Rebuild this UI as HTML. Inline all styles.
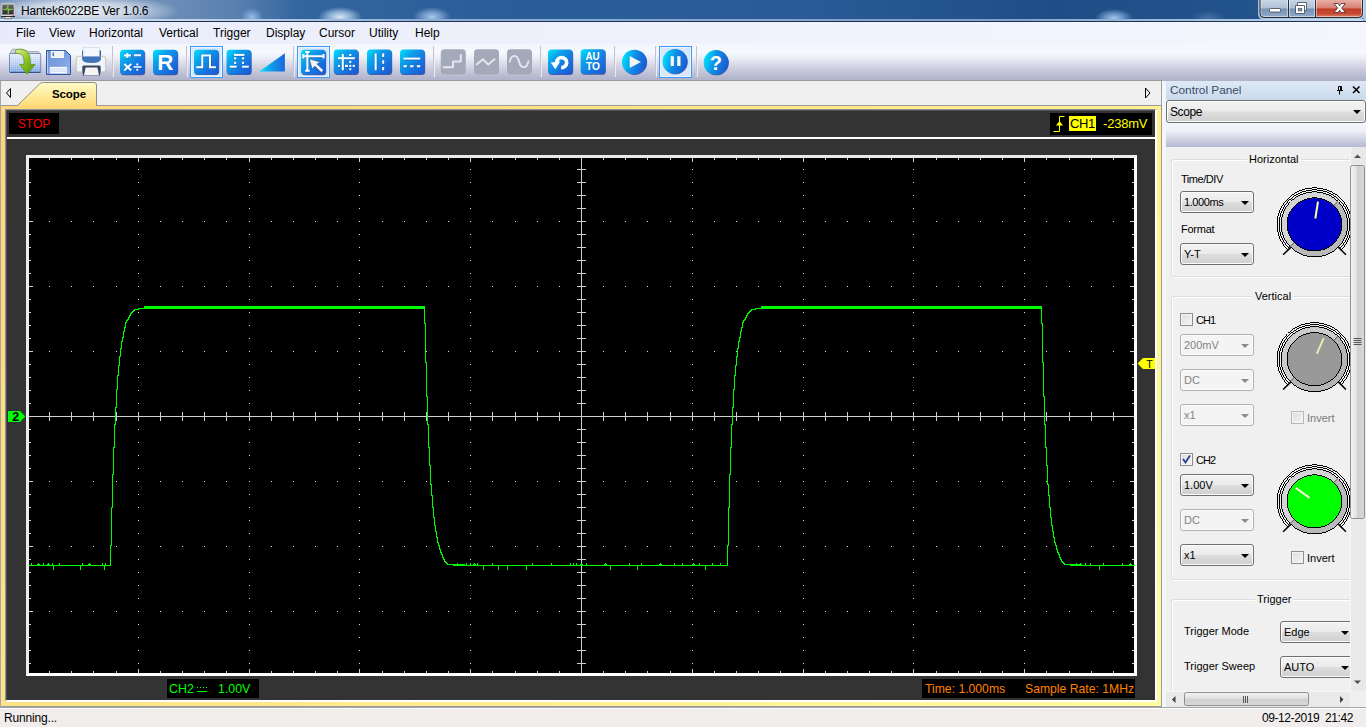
<!DOCTYPE html><html><head><meta charset="utf-8"><title>Hantek6022BE Ver 1.0.6</title><style>
*{box-sizing:border-box;margin:0;padding:0}
html,body{width:1368px;height:728px;overflow:hidden;background:#fff;font-family:"Liberation Sans",sans-serif;}
.a{position:absolute}
#win{position:absolute;left:0;top:0;width:1366px;height:727px;overflow:hidden;background:#f0f0f0}
#title{left:0;top:0;width:1366px;height:22px;background:
 radial-gradient(ellipse 100px 16px at 80px 11px,rgba(255,255,255,.85) 0,rgba(255,255,255,.6) 55%,rgba(255,255,255,0) 100%),
 radial-gradient(ellipse 11px 9px at 252px 17px,rgba(165,205,245,.8),rgba(165,205,245,0) 100%),
 radial-gradient(ellipse 22px 10px at 340px 17px,rgba(225,238,252,.95) 0,rgba(200,225,250,.6) 50%,rgba(200,225,250,0) 100%),
 radial-gradient(ellipse 19px 10px at 432px 17px,rgba(180,212,245,.9) 0,rgba(170,205,240,.5) 50%,rgba(170,205,240,0) 100%),
 radial-gradient(ellipse 19px 9px at 1114px 18px,rgba(175,212,248,.9) 0,rgba(165,205,245,.5) 50%,rgba(165,205,245,0) 100%),
 radial-gradient(ellipse 18px 7px at 1208px 18px,rgba(120,160,210,.4),rgba(120,160,210,0) 100%),
 linear-gradient(90deg,#7896bd 0,#6f8fb8 160px,#5a80b0 235px,#33659f 300px,#2b5d98 500px,#2a5b96 800px,#1f4e87 1050px,#23538b 1250px,#2f6099 1366px)}
#tline1{left:0;top:19px;width:1366px;height:2px;background:linear-gradient(90deg,#d5e2f0 0,#c0d3e8 200px,#8eaed3 420px,#7ea1ca 1000px,#a9c3e0 1230px,#c8daee 1366px)}
#tline2{left:0;top:21px;width:1366px;height:1px;background:#1d3353}
#ttext{left:21px;top:4px;font-size:12px;line-height:15px;color:#000;white-space:nowrap;letter-spacing:-.22px}
#menu{left:0;top:22px;width:1366px;height:22px;background:linear-gradient(90deg,#e9ebfb 0,#edf0fb 30%,#f1f4fc 70%,#f3f6fd 100%)}
.mi{position:absolute;top:26px;font-size:12px;line-height:15px;color:#000;white-space:nowrap}
#tb{left:0;top:44px;width:1366px;height:37px;background:linear-gradient(180deg,#f3f6fc 0,#f5f8fd 9px,#eef0f8 13px,#dfe1ee 18px,#c9cbdd 26px,#b6b8cf 33px,#b0b2ca 37px)}
.sep{position:absolute;top:47px;width:1px;height:30px;background:#c9c9cf;box-shadow:1px 0 0 #f5f5fa}
.hl{position:absolute;top:46px;width:33px;height:32px;border:1px solid #3399ff;background:#d6e8fb}
#tabbar{left:0;top:81px;width:1162px;height:25px;background:#f0f0f0;border-right:1px solid #a0a0a0}
#ybox{left:0;top:105px;width:1162px;height:602px;border:1px solid #9a9a9a;border-left-color:#e8e8e8;background:linear-gradient(132deg,#ffd678 0,#fffc9e 100%)}
#dark{left:5px;top:109px;width:1152px;height:593px;background:#333;border-top:1px solid #8a8e97;border-left:1px solid #8a8e97;border-right:2px solid #fff;border-bottom:2px solid #fff;box-shadow:inset 1px 1px 0 #505050}
.bb{position:absolute;background:#000;font-size:12px;line-height:21px;white-space:nowrap}
#status{left:0;top:708px;width:1365px;height:19px;background:#f0edec;border-top:1px solid #fff;font-size:12px;color:#000}
#cp{left:1162px;top:81px;width:204px;height:626px;background:#f3f6fc}
#cph{left:4px;top:0;width:200px;height:19px;background:linear-gradient(180deg,#dfe9f5,#c9d9ec);color:#3b4c68;font-size:11.8px;line-height:18px}
#cpg{left:4px;top:42px;width:200px;height:24px;background:linear-gradient(180deg,#f4f6fc 0,#f0f2fa 30%,#b6b8d2 100%)}
#cpc{left:4px;top:66px;width:184px;height:544px;background:#f0f0f0;overflow:hidden}
.combo{position:absolute;height:22px;border:1px solid #707070;border-radius:3px;background:linear-gradient(180deg,#f2f2f2 0,#ebebeb 48%,#dddddd 52%,#cfcfcf 100%);box-shadow:inset 0 0 0 1px #fcfcfc;font-size:11px;line-height:20px;padding-left:3px;color:#000;white-space:nowrap}
.combo.dis{border-color:#adb2b5;background:#f4f4f4;color:#838383}
.combo i{position:absolute;right:4px;top:9px;width:0;height:0;border-left:4px solid transparent;border-right:4px solid transparent;border-top:4px solid #000}
.combo.dis i{border-top-color:#8a8a8a}
.grp{position:absolute;border:1px solid #d5dfe5;border-radius:3px;box-shadow:inset 1px 1px 0 #fff, 1px 1px 0 #fff}
.gt{position:absolute;background:#f0f0f0;font-size:11px;line-height:14px;color:#000;padding:0 2px;white-space:nowrap}
.lb{position:absolute;font-size:11px;line-height:14px;color:#000;white-space:nowrap}
.cb{position:absolute;width:13px;height:13px;border:1px solid #8e8f8f;background:linear-gradient(135deg,#dcdcdc,#f6f6f6);box-shadow:inset 0 0 0 1px #f4f4f4}
</style></head><body><div id="win"><div id="title" class="a"></div><div id="tline1" class="a"></div><div id="tline2" class="a"></div>
<div class="a" style="left:1363px;top:0;width:3px;height:21px;background:linear-gradient(90deg,#8fb0d6,#b4cde8)"></div>
<svg class="a" style="left:0;top:0" width="20" height="21" viewBox="0 0 20 21">
<defs><linearGradient id="scr" x1="0" y1="0" x2="0" y2="1"><stop offset="0" stop-color="#6a6a6a"/><stop offset="1" stop-color="#2a2a2a"/></linearGradient></defs>
<rect x="1.300" y="3.300" width="13.400" height="12.800" rx=".8" fill="#dedede" stroke="#b5b5b5" stroke-width=".6"/>
<rect x="2.300" y="4.500" width="11.400" height="10" fill="url(#scr)"/>
<path d="M3.300,9.400H6.500L7.300,8.300L7.900,5.300L8.300,13.600L8.900,9.400H12.800" fill="none" stroke="#7fc241" stroke-width="1.100"/>
<rect x="12.600" y="14.900" width="1.200" height="1" fill="#e0405a"/>
<rect x="1" y="16.100" width="14" height="1" fill="#1c1c1c"/>
<path d="M5.800,17.100H10.200L11,18.300H5Z" fill="#eee"/><rect x="4" y="18.300" width="8" height=".9" fill="#777"/></svg>
<div id="ttext" class="a">Hantek6022BE Ver 1.0.6</div>
<svg class="a" style="left:1256px;top:0" width="110" height="21" viewBox="-2 0 110 21">
<defs>
<linearGradient id="wb" x1="0" y1="0" x2="0" y2="1"><stop offset="0" stop-color="#c9d6e5"/><stop offset=".47" stop-color="#aebfd4"/><stop offset=".5" stop-color="#7490b3"/><stop offset="1" stop-color="#93aecd"/></linearGradient>
<linearGradient id="wc" x1="0" y1="0" x2="0" y2="1"><stop offset="0" stop-color="#eaaea4"/><stop offset=".47" stop-color="#d67e70"/><stop offset=".5" stop-color="#c23b26"/><stop offset=".8" stop-color="#c84c34"/><stop offset="1" stop-color="#df9274"/></linearGradient>
</defs>
<path d="M1,0V13.500Q1,18.500 6,18.500H100.500Q105.500,18.500 105.500,13.500V0" fill="none" stroke="#d6e4f2" stroke-opacity=".75" stroke-width="2"/>
<path d="M2,0H30.500V17.500H6Q2,17.500 2,13.500Z" fill="url(#wb)"/>
<path d="M30.500,0H57.500V17.500H30.500Z" fill="url(#wb)"/>
<path d="M57.500,0H104.500V13.500Q104.500,17.500 100.500,17.500H57.500Z" fill="url(#wc)"/>
<path d="M3,0V13.500Q3,16.500 6,16.500H29.500V0M31.500,0V16.500H56.500V0M58.500,0V16.500H100.500Q103.500,16.500 103.500,13.500V0" fill="none" stroke="#fff" stroke-opacity=".45" stroke-width="1"/>
<path d="M2,0V13.500Q2,17.500 6,17.500H100.500Q104.500,17.500 104.500,13.500V0M30.500,0V17.500M57.500,0V17.500" fill="none" stroke="#27303c" stroke-width="1"/>
<rect x="11.500" y="8.500" width="11" height="3.500" rx=".8" fill="#fff" stroke="#4a5664" stroke-width=".9"/>
<path d="M39.500,2.500H48.500V10.500H39.500Z" fill="#fff" stroke="#4a5664" stroke-width=".9"/><rect x="42" y="5" width="4" height="3" fill="#8aa2c0"/>
<path d="M37.500,5.500H46.500V13.500H37.500Z" fill="#fff" stroke="#4a5664" stroke-width=".9"/><rect x="40.200" y="8.300" width="3.600" height="2.600" fill="#7d97b8" stroke="#4a5664" stroke-width=".7"/>
<path d="M76,3.500H80L81.700,5.800L83.400,3.500H87.400L83.700,8L87.400,12.500H83.400L81.700,10.200L80,12.500H76L79.700,8Z" fill="#fff" stroke="#4a3a3a" stroke-width=".9"/>
</svg>
<div id="menu" class="a"></div>
<div class="mi" style="left:16px">File</div>
<div class="mi" style="left:49px">View</div>
<div class="mi" style="left:89px">Horizontal</div>
<div class="mi" style="left:159px">Vertical</div>
<div class="mi" style="left:213px">Trigger</div>
<div class="mi" style="left:266px">Display</div>
<div class="mi" style="left:319px">Cursor</div>
<div class="mi" style="left:369px">Utility</div>
<div class="mi" style="left:415px">Help</div>
<div id="tb" class="a"></div><div class="a" style="left:0;top:80px;width:1162px;height:1px;background:#9a9a9a"></div>
<svg class="a" style="left:0;top:44px" width="760" height="37" viewBox="0 44 760 37"><defs>
<linearGradient id="bl" x1="0" y1="0" x2="1" y2="1"><stop offset="0" stop-color="#00e4ff"/><stop offset=".3" stop-color="#0ca2ea"/><stop offset=".7" stop-color="#1670de"/><stop offset="1" stop-color="#1a58d2"/></linearGradient>
<linearGradient id="blc" x1="0" y1="0.35" x2="1" y2="0.65"><stop offset="0" stop-color="#00e4ff"/><stop offset=".45" stop-color="#0f8ee6"/><stop offset="1" stop-color="#1a58d2"/></linearGradient>
<linearGradient id="tri" x1="0" y1="0" x2="1" y2="0"><stop offset="0" stop-color="#00e4ff"/><stop offset=".5" stop-color="#0f9ae8"/><stop offset="1" stop-color="#1a66dc"/></linearGradient>
<linearGradient id="fo" x1="0" y1="0" x2="0" y2="1"><stop offset="0" stop-color="#e4ecfb"/><stop offset=".5" stop-color="#b5cbf2"/><stop offset="1" stop-color="#6a98df"/></linearGradient>
<linearGradient id="ga" x1="0" y1="0" x2="1" y2="1"><stop offset="0" stop-color="#dff09a"/><stop offset=".5" stop-color="#8cc322"/><stop offset="1" stop-color="#4f8f0e"/></linearGradient>
<linearGradient id="fl" x1="0" y1="0" x2="1" y2="1"><stop offset="0" stop-color="#6a8fd6"/><stop offset=".6" stop-color="#7fa3e2"/><stop offset="1" stop-color="#98b8ee"/></linearGradient>
<pattern id="grid" width="2" height="2" patternUnits="userSpaceOnUse"><path d="M0,0.500H2M0.500,0V2" stroke="#fff" stroke-opacity=".35" stroke-width=".6"/></pattern>
<g id="sq"><rect x=".6" y=".8" width="24.600" height="24.600" rx="3.500" fill="#28307a" opacity=".75"/><rect x="0" y="0" width="24.700" height="24.700" rx="3.500" fill="url(#bl)"/></g>
<g id="gq"><rect x="0" y="0" width="25" height="25.300" rx="3.500" fill="#a4a9b9"/></g>
<g id="cq"><circle cx="12.800" cy="13" r="12.400" fill="#28307a" opacity=".7"/><circle cx="12.400" cy="12.500" r="12.400" fill="url(#blc)"/></g>
</defs><rect x="112" y="46" width="1" height="31" fill="#c4c4c8"/><rect x="113" y="46" width="1" height="31" fill="#f4f4fa" opacity=".8"/><rect x="186" y="46" width="1" height="31" fill="#c4c4c8"/><rect x="187" y="46" width="1" height="31" fill="#f4f4fa" opacity=".8"/><rect x="293" y="46" width="1" height="31" fill="#c4c4c8"/><rect x="294" y="46" width="1" height="31" fill="#f4f4fa" opacity=".8"/><rect x="433" y="46" width="1" height="31" fill="#c4c4c8"/><rect x="434" y="46" width="1" height="31" fill="#f4f4fa" opacity=".8"/><rect x="540" y="46" width="1" height="31" fill="#c4c4c8"/><rect x="541" y="46" width="1" height="31" fill="#f4f4fa" opacity=".8"/><rect x="614" y="46" width="1" height="31" fill="#c4c4c8"/><rect x="615" y="46" width="1" height="31" fill="#f4f4fa" opacity=".8"/><rect x="655" y="46" width="1" height="31" fill="#c4c4c8"/><rect x="656" y="46" width="1" height="31" fill="#f4f4fa" opacity=".8"/><rect x="696" y="46" width="1" height="31" fill="#c4c4c8"/><rect x="697" y="46" width="1" height="31" fill="#f4f4fa" opacity=".8"/><rect x="190.5" y="46.500" width="32" height="31" fill="#d8e8fa" stroke="#3d9bff" stroke-width="1"/><rect x="191.5" y="47.500" width="30" height="29" fill="none" stroke="#eaf3fd" stroke-width="1"/><rect x="297.5" y="46.500" width="32" height="31" fill="#d8e8fa" stroke="#3d9bff" stroke-width="1"/><rect x="298.5" y="47.500" width="30" height="29" fill="none" stroke="#eaf3fd" stroke-width="1"/><rect x="659.5" y="46.500" width="32" height="31" fill="#d8e8fa" stroke="#3d9bff" stroke-width="1"/><rect x="660.5" y="47.500" width="30" height="29" fill="none" stroke="#eaf3fd" stroke-width="1"/><g transform="translate(120,49.8)"><use href="#sq"/><path d="M4,5.600H11M7.400,3.200V8.300" fill="none" stroke="#1a3a9a" stroke-opacity=".5" stroke-width="2" transform="translate(.6,.7)" /><path d="M4,5.600H11M7.400,3.200V8.300" fill="none" stroke="#fff" stroke-width="2" /><path d="M13.900,5.500H21.100" fill="none" stroke="#1a3a9a" stroke-opacity=".5" stroke-width="2" transform="translate(.6,.7)" /><path d="M13.900,5.500H21.100" fill="none" stroke="#fff" stroke-width="2" /><path d="M4.300,14.300L11.300,20.600M11.300,14.300L4.300,20.600" fill="none" stroke="#1a3a9a" stroke-opacity=".5" stroke-width="2" transform="translate(.6,.7)" /><path d="M4.300,14.300L11.300,20.600M11.300,14.300L4.300,20.600" fill="none" stroke="#fff" stroke-width="2" /><path d="M13.600,17.200H21.600" fill="none" stroke="#1a3a9a" stroke-opacity=".5" stroke-width="1.6" transform="translate(.6,.7)" /><path d="M13.600,17.200H21.600" fill="none" stroke="#fff" stroke-width="1.6" /><rect x="16.300" y="13.700" width="2" height="1.800" fill="#fff"/><rect x="16.300" y="19" width="2" height="1.800" fill="#fff"/></g><g transform="translate(153,49.8)"><use href="#sq"/><text x="12.800" y="20.500" text-anchor="middle" font-family="Liberation Sans, sans-serif" font-weight="bold" font-size="22.500" fill="#1a3a9a" fill-opacity=".5">R</text><text x="12.300" y="19.900" text-anchor="middle" font-family="Liberation Sans, sans-serif" font-weight="bold" font-size="22.500" fill="#fff">R</text></g><g transform="translate(194,49.7)"><use href="#sq"/><path d="M2.200,17.500H8.300V5.900H16V17.500H21.900" fill="none" stroke="#1a3a9a" stroke-opacity=".5" stroke-width="2" transform="translate(.6,.7)" /><path d="M2.200,17.500H8.300V5.900H16V17.500H21.900" fill="none" stroke="#fff" stroke-width="2" /></g><g transform="translate(226.5,49.7)"><use href="#sq"/><path d="M7.500,5.200H17.900" fill="none" stroke="#1a3a9a" stroke-opacity=".5" stroke-width="2" transform="translate(.6,.7)" /><path d="M7.500,5.200H17.900" fill="none" stroke="#fff" stroke-width="2" /><path d="M3.300,17H10.200" fill="none" stroke="#1a3a9a" stroke-opacity=".5" stroke-width="2" transform="translate(.6,.7)" /><path d="M3.300,17H10.200" fill="none" stroke="#fff" stroke-width="2" /><path d="M15.600,17H22.300" fill="none" stroke="#1a3a9a" stroke-opacity=".5" stroke-width="2" transform="translate(.6,.7)" /><path d="M15.600,17H22.300" fill="none" stroke="#fff" stroke-width="2" /><path d="M8.700,7.600V14.600" fill="none" stroke="#1a3a9a" stroke-opacity=".5" stroke-width="2" transform="translate(.6,.7)" stroke-dasharray="2.200 2.300"/><path d="M8.700,7.600V14.600" fill="none" stroke="#fff" stroke-width="2" stroke-dasharray="2.200 2.300"/><path d="M16.600,7.600V14.600" fill="none" stroke="#1a3a9a" stroke-opacity=".5" stroke-width="2" transform="translate(.6,.7)" stroke-dasharray="2.200 2.300"/><path d="M16.600,7.600V14.600" fill="none" stroke="#fff" stroke-width="2" stroke-dasharray="2.200 2.300"/></g><path d="M259.300,71.600L284.900,53.200V71.600Z" fill="url(#tri)"/><g transform="translate(301,49.8)"><use href="#sq"/><path d="M1.900,6.400H23M6.400,1.700V21.400M2.400,4.200V8.600M22.600,4.200V8.600M4.200,2.200H8.700M4.200,21H8.700" fill="none" stroke="#1a3a9a" stroke-opacity=".5" stroke-width="2" transform="translate(.6,.7)"/><path d="M1.900,6.400H23M6.400,1.700V21.400M2.400,4.200V8.600M22.600,4.200V8.600M4.200,2.200H8.700M4.200,21H8.700" fill="none" stroke="#fff" stroke-width="2"/><path d="M8.400,9.300L19.200,12.300L15.800,14.300L22.500,20.300L20.300,22.600L13.900,16.300L11.200,19.200Z" fill="#f7f7f7" stroke="#23408f" stroke-opacity=".7" stroke-width=".7"/></g><g transform="translate(333.7,49.5)"><use href="#sq"/><path d="M4.200,8.800H21.200M9.100,4.400V20.800" fill="none" stroke="#1a3a9a" stroke-opacity=".5" stroke-width="2" transform="translate(.6,.7)" /><path d="M4.200,8.800H21.200M9.100,4.400V20.800" fill="none" stroke="#fff" stroke-width="2" /><rect x="16.1" y="5.1" width="2" height="2" fill="#1a3a9a" fill-opacity=".45"/><rect x="15.6" y="4.5" width="2" height="2" fill="#fff"/><rect x="16.1" y="12.0" width="2" height="2.2" fill="#1a3a9a" fill-opacity=".45"/><rect x="15.6" y="11.4" width="2" height="2.2" fill="#fff"/><rect x="16.1" y="19.3" width="2" height="2" fill="#1a3a9a" fill-opacity=".45"/><rect x="15.6" y="18.7" width="2" height="2" fill="#fff"/><rect x="4.8" y="16.0" width="2" height="2" fill="#1a3a9a" fill-opacity=".45"/><rect x="4.3" y="15.4" width="2" height="2" fill="#fff"/><rect x="11.8" y="16.0" width="3" height="2" fill="#1a3a9a" fill-opacity=".45"/><rect x="11.3" y="15.4" width="3" height="2" fill="#fff"/><rect x="16.1" y="16.0" width="2" height="2" fill="#1a3a9a" fill-opacity=".45"/><rect x="15.6" y="15.4" width="2" height="2" fill="#fff"/><rect x="19.5" y="16.0" width="2.2" height="2" fill="#1a3a9a" fill-opacity=".45"/><rect x="19" y="15.4" width="2.2" height="2" fill="#fff"/></g><g transform="translate(367,49.5)"><use href="#sq"/><path d="M8.700,4V20.800" fill="none" stroke="#1a3a9a" stroke-opacity=".5" stroke-width="2" transform="translate(.6,.7)" /><path d="M8.700,4V20.800" fill="none" stroke="#fff" stroke-width="2" /><path d="M16.200,4V20.800" fill="none" stroke="#1a3a9a" stroke-opacity=".5" stroke-width="2" transform="translate(.6,.7)" stroke-dasharray="3.600 3.100"/><path d="M16.200,4V20.800" fill="none" stroke="#fff" stroke-width="2" stroke-dasharray="3.600 3.100"/></g><g transform="translate(400,49.5)"><use href="#sq"/><path d="M3.500,9.100H20.300" fill="none" stroke="#1a3a9a" stroke-opacity=".5" stroke-width="2" transform="translate(.6,.7)" /><path d="M3.500,9.100H20.300" fill="none" stroke="#fff" stroke-width="2" /><path d="M3.500,16.800H20.300" fill="none" stroke="#1a3a9a" stroke-opacity=".5" stroke-width="2" transform="translate(.6,.7)" stroke-dasharray="3.400 3.300"/><path d="M3.500,16.800H20.300" fill="none" stroke="#fff" stroke-width="2" stroke-dasharray="3.400 3.300"/></g><g transform="translate(440.8,49.3)"><use href="#gq"/><path d="M2.900,18H12.200V12.200H20V5.700" fill="none" stroke="#e4e7ef" stroke-width="1.900" stroke-linecap="round" stroke-linejoin="round"/></g><g transform="translate(474,49.3)"><use href="#gq"/><path d="M2.600,15.200L8.800,10L14.300,15.200L20.500,10" fill="none" stroke="#e4e7ef" stroke-width="1.900" stroke-linecap="round" stroke-linejoin="round" stroke-width="1.600"/></g><g transform="translate(507,49.3)"><use href="#gq"/><path d="M2.800,12.200C4.500,5 10,4.500 12,12.200S19.500,20 21.500,11.900" fill="none" stroke="#e4e7ef" stroke-width="1.900" stroke-linecap="round" stroke-linejoin="round" stroke-width="1.600"/></g><g transform="translate(548,49.6)"><use href="#sq"/><path d="M8.700,12.800A5,5 0 1 1 13.200,17.900" fill="none" stroke="#fff" stroke-width="3.700"/><path d="M2.800,12.900L12.300,11.900L7.300,19.600Z" fill="#fff"/></g><g transform="translate(580.6,49.3)"><use href="#sq"/><text x="4.800" y="10.600" font-family="Liberation Sans, sans-serif" font-weight="bold" font-size="10" fill="#fff" textLength="14.200" lengthAdjust="spacingAndGlyphs">AU</text><text x="5.400" y="21" font-family="Liberation Sans, sans-serif" font-weight="bold" font-size="10" fill="#fff" textLength="14" lengthAdjust="spacingAndGlyphs">TO</text></g><g transform="translate(622,49.6)"><use href="#cq"/><path d="M7.700,6.500L18.900,12.300L7.700,18.500Z" fill="#f4f4f4"/></g><g transform="translate(662.6,48.9)"><use href="#cq"/><rect x="8.100" y="7.300" width="3.200" height="9.800" fill="#f8f6f0"/><rect x="14.600" y="7.300" width="3.300" height="9.800" fill="#f8f6f0"/></g><g transform="translate(703.7,49.9)"><use href="#cq"/><text x="12.200" y="20.100" text-anchor="middle" font-family="Liberation Sans, sans-serif" font-weight="bold" font-size="20" fill="#fff">?</text></g><path d="M9.800,53.800L12.400,49.200H22.300L28.600,51.500H38.300L40.600,53.800Z" fill="#c8d2e6" stroke="#9a9484" stroke-width=".7"/>
<rect x="9.500" y="53.500" width="31.200" height="19" rx="1" fill="url(#fo)" stroke="#5b78ad" stroke-width=".8"/>
<rect x="10" y="54" width="30.200" height="18" fill="url(#grid)"/>
<path d="M10,72.400H40.400" stroke="#2f4f86" stroke-width="1"/>
<path d="M15.800,49.800C24,48.200 31,50 30.400,64.500H35.200L27.200,74.200L19.600,64.500H24C24.500,56.500 22.500,53.500 15.500,53.200Z" fill="url(#ga)" stroke="#5a8f14" stroke-width=".7"/><path d="M46.500,50.500H65.500L70.500,55.500V74.500H46.500Z" fill="url(#fl)" stroke="#2f55a2" stroke-width="1"/>
<path d="M47.500,51.500V73.500" stroke="#b9cef6" stroke-width="1"/>
<rect x="50.800" y="50.900" width="13.200" height="7.100" fill="#eef3fc"/><rect x="52.600" y="52.300" width="1.300" height="3.900" fill="#3f5fa5"/>
<rect x="49.800" y="66.900" width="17.100" height="6.600" fill="#f4f8fe"/><path d="M50.500,69.200H66.200M50.500,71.300H66.200" stroke="#c3d3ef" stroke-width=".8"/><path d="M82,50.500H101V58Q101,63 91.500,63T82,58Z" fill="#2f5f9c"/>
<rect x="76.300" y="56.300" width="29.400" height="15.600" rx="2.200" fill="#f1f3fa" stroke="#c4bc9f" stroke-width=".8"/>
<rect x="83.100" y="47.300" width="16.200" height="9.500" fill="#f2f7fd" stroke="#c9d3e3" stroke-width=".6"/>
<path d="M82,56.600H101V58.500Q101,63 91.500,63T82,58.500Z" fill="#3f74b8"/>
<path d="M82.300,67Q82.300,65.600 84,65.600H99Q100.700,65.600 100.700,67V71L99.900,75.500H83.100L82.300,71Z" fill="#34465e"/>
<path d="M85.600,67.400H97.400L99,75.200H84Z" fill="#f7f4f6"/></svg>
<div id="tabbar" class="a"></div>
<svg class="a" style="left:0;top:81px" width="1162" height="26" viewBox="0 0 1162 26">
<defs><linearGradient id="tabg" x1="0" y1="0" x2="0" y2="1"><stop offset="0" stop-color="#fffbc6"/><stop offset=".5" stop-color="#ffed9f"/><stop offset="1" stop-color="#ffd978"/></linearGradient></defs>
<path d="M17,25 L39,3.500 Q41,1.500 43.500,1.500 H94 Q96.500,1.500 96.500,4 V25 Z" fill="url(#tabg)"/>
<path d="M0,24.500 H17.500 L39.500,3 Q41,1.500 43.500,1.500 H94 Q96.500,1.500 96.500,4 V24.500 H1161" fill="none" stroke="#8e8e8e" stroke-width="1"/>
<path d="M10.500,7.500 L6.500,12 L10.500,16.500 Z" fill="none" stroke="#000" stroke-width="1"/>
<path d="M1145.500,7 L1150,12 L1145.500,17 Z" fill="none" stroke="#000" stroke-width="1"/>
<text x="52" y="17" font-family="Liberation Sans, sans-serif" font-weight="bold" font-size="11.500" fill="#000" letter-spacing="-.1">Scope</text>
</svg>
<div id="ybox" class="a"></div><div class="a" style="left:0;top:81px;width:1px;height:626px;background:#a6a6a6"></div>
<div class="a" style="left:18px;top:105px;width:78px;height:1px;background:#ffd978"></div>
<div id="dark" class="a"></div>
<div class="bb" style="left:9px;top:113px;width:50px;height:21px;line-height:23px;color:#f00;text-align:center">STOP</div>
<div class="a" style="left:7px;top:137px;width:1148px;height:2px;background:#fff"></div>
<div class="bb" style="left:1050px;top:113px;width:102px;height:22px"></div>
<svg class="a" style="left:1052px;top:113px" width="16" height="22" viewBox="0 0 16 22"><path d="M1.500,18.500 H7.500 V3.500 H12.500" fill="none" stroke="#ff0" stroke-width="1"/><path d="M4,12.500 h7 l-3.500,-4.500 z" fill="#ff0"/></svg>
<div class="a" style="left:1069px;top:116px;width:27px;height:15px;background:#ff0;color:#000;font-size:13px;line-height:15px;text-align:center;letter-spacing:-.3px">CH1</div>
<div class="a" style="left:1103px;top:116px;color:#ff0;font-size:13px;line-height:15px;white-space:nowrap;letter-spacing:-.2px">-238mV</div>
<svg class="a" style="left:0;top:140px" width="1160" height="562" viewBox="0 140 1160 562"><rect x="26" y="155" width="1111" height="521" fill="#fff"/><path d="M26,155H1137L1134,158H29V673L26,676Z" fill="#ececec"/><rect x="29" y="158" width="1105" height="515" fill="#000"/><path d="M49,221.5h1M71,221.5h1M93,221.5h1M116,221.5h1M138,221.5h1M160,221.5h1M182,221.5h1M204,221.5h1M226,221.5h1M249,221.5h1M271,221.5h1M293,221.5h1M315,221.5h1M337,221.5h1M359,221.5h1M382,221.5h1M404,221.5h1M426,221.5h1M448,221.5h1M470,221.5h1M492,221.5h1M515,221.5h1M537,221.5h1M559,221.5h1M581,221.5h1M603,221.5h1M625,221.5h1M647,221.5h1M670,221.5h1M692,221.5h1M714,221.5h1M736,221.5h1M758,221.5h1M780,221.5h1M803,221.5h1M825,221.5h1M847,221.5h1M869,221.5h1M891,221.5h1M913,221.5h1M936,221.5h1M958,221.5h1M980,221.5h1M1002,221.5h1M1024,221.5h1M1046,221.5h1M1069,221.5h1M1091,221.5h1M1113,221.5h1M49,286.5h1M71,286.5h1M93,286.5h1M116,286.5h1M138,286.5h1M160,286.5h1M182,286.5h1M204,286.5h1M226,286.5h1M249,286.5h1M271,286.5h1M293,286.5h1M315,286.5h1M337,286.5h1M359,286.5h1M382,286.5h1M404,286.5h1M426,286.5h1M448,286.5h1M470,286.5h1M492,286.5h1M515,286.5h1M537,286.5h1M559,286.5h1M581,286.5h1M603,286.5h1M625,286.5h1M647,286.5h1M670,286.5h1M692,286.5h1M714,286.5h1M736,286.5h1M758,286.5h1M780,286.5h1M803,286.5h1M825,286.5h1M847,286.5h1M869,286.5h1M891,286.5h1M913,286.5h1M936,286.5h1M958,286.5h1M980,286.5h1M1002,286.5h1M1024,286.5h1M1046,286.5h1M1069,286.5h1M1091,286.5h1M1113,286.5h1M49,351.5h1M71,351.5h1M93,351.5h1M116,351.5h1M138,351.5h1M160,351.5h1M182,351.5h1M204,351.5h1M226,351.5h1M249,351.5h1M271,351.5h1M293,351.5h1M315,351.5h1M337,351.5h1M359,351.5h1M382,351.5h1M404,351.5h1M426,351.5h1M448,351.5h1M470,351.5h1M492,351.5h1M515,351.5h1M537,351.5h1M559,351.5h1M581,351.5h1M603,351.5h1M625,351.5h1M647,351.5h1M670,351.5h1M692,351.5h1M714,351.5h1M736,351.5h1M758,351.5h1M780,351.5h1M803,351.5h1M825,351.5h1M847,351.5h1M869,351.5h1M891,351.5h1M913,351.5h1M936,351.5h1M958,351.5h1M980,351.5h1M1002,351.5h1M1024,351.5h1M1046,351.5h1M1069,351.5h1M1091,351.5h1M1113,351.5h1M49,481.5h1M71,481.5h1M93,481.5h1M116,481.5h1M138,481.5h1M160,481.5h1M182,481.5h1M204,481.5h1M226,481.5h1M249,481.5h1M271,481.5h1M293,481.5h1M315,481.5h1M337,481.5h1M359,481.5h1M382,481.5h1M404,481.5h1M426,481.5h1M448,481.5h1M470,481.5h1M492,481.5h1M515,481.5h1M537,481.5h1M559,481.5h1M581,481.5h1M603,481.5h1M625,481.5h1M647,481.5h1M670,481.5h1M692,481.5h1M714,481.5h1M736,481.5h1M758,481.5h1M780,481.5h1M803,481.5h1M825,481.5h1M847,481.5h1M869,481.5h1M891,481.5h1M913,481.5h1M936,481.5h1M958,481.5h1M980,481.5h1M1002,481.5h1M1024,481.5h1M1046,481.5h1M1069,481.5h1M1091,481.5h1M1113,481.5h1M49,546.5h1M71,546.5h1M93,546.5h1M116,546.5h1M138,546.5h1M160,546.5h1M182,546.5h1M204,546.5h1M226,546.5h1M249,546.5h1M271,546.5h1M293,546.5h1M315,546.5h1M337,546.5h1M359,546.5h1M382,546.5h1M404,546.5h1M426,546.5h1M448,546.5h1M470,546.5h1M492,546.5h1M515,546.5h1M537,546.5h1M559,546.5h1M581,546.5h1M603,546.5h1M625,546.5h1M647,546.5h1M670,546.5h1M692,546.5h1M714,546.5h1M736,546.5h1M758,546.5h1M780,546.5h1M803,546.5h1M825,546.5h1M847,546.5h1M869,546.5h1M891,546.5h1M913,546.5h1M936,546.5h1M958,546.5h1M980,546.5h1M1002,546.5h1M1024,546.5h1M1046,546.5h1M1069,546.5h1M1091,546.5h1M1113,546.5h1M49,611.5h1M71,611.5h1M93,611.5h1M116,611.5h1M138,611.5h1M160,611.5h1M182,611.5h1M204,611.5h1M226,611.5h1M249,611.5h1M271,611.5h1M293,611.5h1M315,611.5h1M337,611.5h1M359,611.5h1M382,611.5h1M404,611.5h1M426,611.5h1M448,611.5h1M470,611.5h1M492,611.5h1M515,611.5h1M537,611.5h1M559,611.5h1M581,611.5h1M603,611.5h1M625,611.5h1M647,611.5h1M670,611.5h1M692,611.5h1M714,611.5h1M736,611.5h1M758,611.5h1M780,611.5h1M803,611.5h1M825,611.5h1M847,611.5h1M869,611.5h1M891,611.5h1M913,611.5h1M936,611.5h1M958,611.5h1M980,611.5h1M1002,611.5h1M1024,611.5h1M1046,611.5h1M1069,611.5h1M1091,611.5h1M1113,611.5h1M138,169.5h1M138,182.5h1M138,195.5h1M138,208.5h1M138,221.5h1M138,234.5h1M138,247.5h1M138,260.5h1M138,273.5h1M138,286.5h1M138,299.5h1M138,312.5h1M138,325.5h1M138,338.5h1M138,351.5h1M138,364.5h1M138,377.5h1M138,390.5h1M138,403.5h1M138,429.5h1M138,442.5h1M138,455.5h1M138,468.5h1M138,481.5h1M138,494.5h1M138,507.5h1M138,520.5h1M138,533.5h1M138,546.5h1M138,559.5h1M138,572.5h1M138,585.5h1M138,598.5h1M138,611.5h1M138,624.5h1M138,637.5h1M138,650.5h1M138,663.5h1M249,169.5h1M249,182.5h1M249,195.5h1M249,208.5h1M249,221.5h1M249,234.5h1M249,247.5h1M249,260.5h1M249,273.5h1M249,286.5h1M249,299.5h1M249,312.5h1M249,325.5h1M249,338.5h1M249,351.5h1M249,364.5h1M249,377.5h1M249,390.5h1M249,403.5h1M249,429.5h1M249,442.5h1M249,455.5h1M249,468.5h1M249,481.5h1M249,494.5h1M249,507.5h1M249,520.5h1M249,533.5h1M249,546.5h1M249,559.5h1M249,572.5h1M249,585.5h1M249,598.5h1M249,611.5h1M249,624.5h1M249,637.5h1M249,650.5h1M249,663.5h1M359,169.5h1M359,182.5h1M359,195.5h1M359,208.5h1M359,221.5h1M359,234.5h1M359,247.5h1M359,260.5h1M359,273.5h1M359,286.5h1M359,299.5h1M359,312.5h1M359,325.5h1M359,338.5h1M359,351.5h1M359,364.5h1M359,377.5h1M359,390.5h1M359,403.5h1M359,429.5h1M359,442.5h1M359,455.5h1M359,468.5h1M359,481.5h1M359,494.5h1M359,507.5h1M359,520.5h1M359,533.5h1M359,546.5h1M359,559.5h1M359,572.5h1M359,585.5h1M359,598.5h1M359,611.5h1M359,624.5h1M359,637.5h1M359,650.5h1M359,663.5h1M470,169.5h1M470,182.5h1M470,195.5h1M470,208.5h1M470,221.5h1M470,234.5h1M470,247.5h1M470,260.5h1M470,273.5h1M470,286.5h1M470,299.5h1M470,312.5h1M470,325.5h1M470,338.5h1M470,351.5h1M470,364.5h1M470,377.5h1M470,390.5h1M470,403.5h1M470,429.5h1M470,442.5h1M470,455.5h1M470,468.5h1M470,481.5h1M470,494.5h1M470,507.5h1M470,520.5h1M470,533.5h1M470,546.5h1M470,559.5h1M470,572.5h1M470,585.5h1M470,598.5h1M470,611.5h1M470,624.5h1M470,637.5h1M470,650.5h1M470,663.5h1M692,169.5h1M692,182.5h1M692,195.5h1M692,208.5h1M692,221.5h1M692,234.5h1M692,247.5h1M692,260.5h1M692,273.5h1M692,286.5h1M692,299.5h1M692,312.5h1M692,325.5h1M692,338.5h1M692,351.5h1M692,364.5h1M692,377.5h1M692,390.5h1M692,403.5h1M692,429.5h1M692,442.5h1M692,455.5h1M692,468.5h1M692,481.5h1M692,494.5h1M692,507.5h1M692,520.5h1M692,533.5h1M692,546.5h1M692,559.5h1M692,572.5h1M692,585.5h1M692,598.5h1M692,611.5h1M692,624.5h1M692,637.5h1M692,650.5h1M692,663.5h1M803,169.5h1M803,182.5h1M803,195.5h1M803,208.5h1M803,221.5h1M803,234.5h1M803,247.5h1M803,260.5h1M803,273.5h1M803,286.5h1M803,299.5h1M803,312.5h1M803,325.5h1M803,338.5h1M803,351.5h1M803,364.5h1M803,377.5h1M803,390.5h1M803,403.5h1M803,429.5h1M803,442.5h1M803,455.5h1M803,468.5h1M803,481.5h1M803,494.5h1M803,507.5h1M803,520.5h1M803,533.5h1M803,546.5h1M803,559.5h1M803,572.5h1M803,585.5h1M803,598.5h1M803,611.5h1M803,624.5h1M803,637.5h1M803,650.5h1M803,663.5h1M913,169.5h1M913,182.5h1M913,195.5h1M913,208.5h1M913,221.5h1M913,234.5h1M913,247.5h1M913,260.5h1M913,273.5h1M913,286.5h1M913,299.5h1M913,312.5h1M913,325.5h1M913,338.5h1M913,351.5h1M913,364.5h1M913,377.5h1M913,390.5h1M913,403.5h1M913,429.5h1M913,442.5h1M913,455.5h1M913,468.5h1M913,481.5h1M913,494.5h1M913,507.5h1M913,520.5h1M913,533.5h1M913,546.5h1M913,559.5h1M913,572.5h1M913,585.5h1M913,598.5h1M913,611.5h1M913,624.5h1M913,637.5h1M913,650.5h1M913,663.5h1M1024,169.5h1M1024,182.5h1M1024,195.5h1M1024,208.5h1M1024,221.5h1M1024,234.5h1M1024,247.5h1M1024,260.5h1M1024,273.5h1M1024,286.5h1M1024,299.5h1M1024,312.5h1M1024,325.5h1M1024,338.5h1M1024,351.5h1M1024,364.5h1M1024,377.5h1M1024,390.5h1M1024,403.5h1M1024,429.5h1M1024,442.5h1M1024,455.5h1M1024,468.5h1M1024,481.5h1M1024,494.5h1M1024,507.5h1M1024,520.5h1M1024,533.5h1M1024,546.5h1M1024,559.5h1M1024,572.5h1M1024,585.5h1M1024,598.5h1M1024,611.5h1M1024,624.5h1M1024,637.5h1M1024,650.5h1M1024,663.5h1" stroke="#e0e0e0" stroke-width="1" fill="none" shape-rendering="crispEdges"/><path d="M29,416.5H1134M581.5,158V673M49.5,412v9M49.5,158v2M49.5,673v-2M71.5,412v9M71.5,158v2M71.5,673v-2M93.5,412v9M93.5,158v2M93.5,673v-2M116.5,412v9M116.5,158v2M116.5,673v-2M138.5,412v9M138.5,158v4M138.5,673v-4M160.5,412v9M160.5,158v2M160.5,673v-2M182.5,412v9M182.5,158v2M182.5,673v-2M204.5,412v9M204.5,158v2M204.5,673v-2M226.5,412v9M226.5,158v2M226.5,673v-2M249.5,412v9M249.5,158v4M249.5,673v-4M271.5,412v9M271.5,158v2M271.5,673v-2M293.5,412v9M293.5,158v2M293.5,673v-2M315.5,412v9M315.5,158v2M315.5,673v-2M337.5,412v9M337.5,158v2M337.5,673v-2M359.5,412v9M359.5,158v4M359.5,673v-4M382.5,412v9M382.5,158v2M382.5,673v-2M404.5,412v9M404.5,158v2M404.5,673v-2M426.5,412v9M426.5,158v2M426.5,673v-2M448.5,412v9M448.5,158v2M448.5,673v-2M470.5,412v9M470.5,158v4M470.5,673v-4M492.5,412v9M492.5,158v2M492.5,673v-2M515.5,412v9M515.5,158v2M515.5,673v-2M537.5,412v9M537.5,158v2M537.5,673v-2M559.5,412v9M559.5,158v2M559.5,673v-2M581.5,158v4M581.5,673v-4M603.5,412v9M603.5,158v2M603.5,673v-2M625.5,412v9M625.5,158v2M625.5,673v-2M647.5,412v9M647.5,158v2M647.5,673v-2M670.5,412v9M670.5,158v2M670.5,673v-2M692.5,412v9M692.5,158v4M692.5,673v-4M714.5,412v9M714.5,158v2M714.5,673v-2M736.5,412v9M736.5,158v2M736.5,673v-2M758.5,412v9M758.5,158v2M758.5,673v-2M780.5,412v9M780.5,158v2M780.5,673v-2M803.5,412v9M803.5,158v4M803.5,673v-4M825.5,412v9M825.5,158v2M825.5,673v-2M847.5,412v9M847.5,158v2M847.5,673v-2M869.5,412v9M869.5,158v2M869.5,673v-2M891.5,412v9M891.5,158v2M891.5,673v-2M913.5,412v9M913.5,158v4M913.5,673v-4M936.5,412v9M936.5,158v2M936.5,673v-2M958.5,412v9M958.5,158v2M958.5,673v-2M980.5,412v9M980.5,158v2M980.5,673v-2M1002.5,412v9M1002.5,158v2M1002.5,673v-2M1024.5,412v9M1024.5,158v4M1024.5,673v-4M1046.5,412v9M1046.5,158v2M1046.5,673v-2M1069.5,412v9M1069.5,158v2M1069.5,673v-2M1091.5,412v9M1091.5,158v2M1091.5,673v-2M1113.5,412v9M1113.5,158v2M1113.5,673v-2M29,169.5h2M1134,169.5h-2M577,169.5h9M29,182.5h2M1134,182.5h-2M577,182.5h9M29,195.5h2M1134,195.5h-2M577,195.5h9M29,208.5h2M1134,208.5h-2M577,208.5h9M29,221.5h4M1134,221.5h-4M577,221.5h9M29,234.5h2M1134,234.5h-2M577,234.5h9M29,247.5h2M1134,247.5h-2M577,247.5h9M29,260.5h2M1134,260.5h-2M577,260.5h9M29,273.5h2M1134,273.5h-2M577,273.5h9M29,286.5h4M1134,286.5h-4M577,286.5h9M29,299.5h2M1134,299.5h-2M577,299.5h9M29,312.5h2M1134,312.5h-2M577,312.5h9M29,325.5h2M1134,325.5h-2M577,325.5h9M29,338.5h2M1134,338.5h-2M577,338.5h9M29,351.5h4M1134,351.5h-4M577,351.5h9M29,364.5h2M1134,364.5h-2M577,364.5h9M29,377.5h2M1134,377.5h-2M577,377.5h9M29,390.5h2M1134,390.5h-2M577,390.5h9M29,403.5h2M1134,403.5h-2M577,403.5h9M29,429.5h2M1134,429.5h-2M577,429.5h9M29,442.5h2M1134,442.5h-2M577,442.5h9M29,455.5h2M1134,455.5h-2M577,455.5h9M29,468.5h2M1134,468.5h-2M577,468.5h9M29,481.5h4M1134,481.5h-4M577,481.5h9M29,494.5h2M1134,494.5h-2M577,494.5h9M29,507.5h2M1134,507.5h-2M577,507.5h9M29,520.5h2M1134,520.5h-2M577,520.5h9M29,533.5h2M1134,533.5h-2M577,533.5h9M29,546.5h4M1134,546.5h-4M577,546.5h9M29,559.5h2M1134,559.5h-2M577,559.5h9M29,572.5h2M1134,572.5h-2M577,572.5h9M29,585.5h2M1134,585.5h-2M577,585.5h9M29,598.5h2M1134,598.5h-2M577,598.5h9M29,611.5h4M1134,611.5h-4M577,611.5h9M29,624.5h2M1134,624.5h-2M577,624.5h9M29,637.5h2M1134,637.5h-2M577,637.5h9M29,650.5h2M1134,650.5h-2M577,650.5h9M29,663.5h2M1134,663.5h-2M577,663.5h9" stroke="#d0d0d0" stroke-width="1" fill="none" shape-rendering="crispEdges"/><polyline points="28.5,565.5 110.5,565.5 110.5,565.5 110.5,565.5 110.5,545.5 111.5,545.5 111.5,507.5 112.5,507.5 112.5,474.5 113.5,474.5 113.5,447.5 114.5,447.5 114.5,424.5 115.5,424.5 115.5,407.5 116.5,407.5 116.5,389.5 117.5,389.5 117.5,375.5 118.5,375.5 118.5,365.5 119.5,365.5 119.5,356.5 120.5,356.5 120.5,348.5 121.5,348.5 121.5,341.5 122.5,341.5 122.5,337.5 123.5,337.5 123.5,331.5 124.5,331.5 124.5,327.5 125.5,327.5 125.5,322.5 126.5,322.5 126.5,320.5 127.5,320.5 127.5,319.5 128.5,319.5 128.5,317.5 129.5,317.5 129.5,315.5 130.5,315.5 130.5,313.5 131.5,313.5 131.5,312.5 132.5,312.5 132.5,311.5 133.5,311.5 133.5,310.5 134.5,310.5 134.5,309.5 135.5,309.5 135.5,309.5 136.5,309.5 136.5,309.5 137.5,309.5 137.5,309.5 138.5,309.5 138.5,308.5 139.5,308.5 139.5,308.5 140.5,308.5 140.5,308.5 141.5,308.5 141.5,308.5 142.5,308.5 142.5,308.5 143.5,308.5 143.5,308.5 424.5,308.5 424.5,308.5 424.5,308.5 424.5,323.5 425.5,323.5 425.5,362.5 426.5,362.5 426.5,396.5 427.5,396.5 427.5,424.5 428.5,424.5 428.5,447.5 429.5,447.5 429.5,465.5 430.5,465.5 430.5,484.5 431.5,484.5 431.5,495.5 432.5,495.5 432.5,507.5 433.5,507.5 433.5,517.5 434.5,517.5 434.5,525.5 435.5,525.5 435.5,531.5 436.5,531.5 436.5,537.5 437.5,537.5 437.5,542.5 438.5,542.5 438.5,545.5 439.5,545.5 439.5,549.5 440.5,549.5 440.5,552.5 441.5,552.5 441.5,554.5 442.5,554.5 442.5,557.5 443.5,557.5 443.5,559.5 444.5,559.5 444.5,561.5 445.5,561.5 445.5,562.5 446.5,562.5 446.5,563.5 447.5,563.5 447.5,564.5 448.5,564.5 448.5,564.5 449.5,564.5 449.5,564.5 450.5,564.5 450.5,564.5 451.5,564.5 451.5,564.5 452.5,564.5 452.5,564.5 453.5,564.5 453.5,565.5 454.5,565.5 727.5,565.5 727.5,565.5 727.5,565.5 727.5,545.5 728.5,545.5 728.5,507.5 729.5,507.5 729.5,474.5 730.5,474.5 730.5,447.5 731.5,447.5 731.5,424.5 732.5,424.5 732.5,407.5 733.5,407.5 733.5,389.5 734.5,389.5 734.5,375.5 735.5,375.5 735.5,365.5 736.5,365.5 736.5,356.5 737.5,356.5 737.5,348.5 738.5,348.5 738.5,341.5 739.5,341.5 739.5,337.5 740.5,337.5 740.5,331.5 741.5,331.5 741.5,327.5 742.5,327.5 742.5,322.5 743.5,322.5 743.5,320.5 744.5,320.5 744.5,319.5 745.5,319.5 745.5,317.5 746.5,317.5 746.5,315.5 747.5,315.5 747.5,313.5 748.5,313.5 748.5,312.5 749.5,312.5 749.5,311.5 750.5,311.5 750.5,310.5 751.5,310.5 751.5,309.5 752.5,309.5 752.5,309.5 753.5,309.5 753.5,309.5 754.5,309.5 754.5,309.5 755.5,309.5 755.5,308.5 756.5,308.5 756.5,308.5 757.5,308.5 757.5,308.5 758.5,308.5 758.5,308.5 759.5,308.5 759.5,308.5 760.5,308.5 760.5,308.5 1041.5,308.5 1041.5,308.5 1041.5,308.5 1041.5,323.5 1042.5,323.5 1042.5,362.5 1043.5,362.5 1043.5,396.5 1044.5,396.5 1044.5,424.5 1045.5,424.5 1045.5,447.5 1046.5,447.5 1046.5,465.5 1047.5,465.5 1047.5,484.5 1048.5,484.5 1048.5,495.5 1049.5,495.5 1049.5,507.5 1050.5,507.5 1050.5,517.5 1051.5,517.5 1051.5,525.5 1052.5,525.5 1052.5,531.5 1053.5,531.5 1053.5,537.5 1054.5,537.5 1054.5,542.5 1055.5,542.5 1055.5,545.5 1056.5,545.5 1056.5,549.5 1057.5,549.5 1057.5,552.5 1058.5,552.5 1058.5,554.5 1059.5,554.5 1059.5,557.5 1060.5,557.5 1060.5,559.5 1061.5,559.5 1061.5,561.5 1062.5,561.5 1062.5,562.5 1063.5,562.5 1063.5,563.5 1064.5,563.5 1064.5,564.5 1065.5,564.5 1065.5,564.5 1066.5,564.5 1066.5,564.5 1067.5,564.5 1067.5,564.5 1068.5,564.5 1068.5,564.5 1069.5,564.5 1069.5,564.5 1070.5,564.5 1070.5,565.5 1071.5,565.5 1134.5,565.5" fill="none" stroke="#00fa00" stroke-width="1" stroke-linejoin="miter" shape-rendering="crispEdges"/><path d="M31.5,563v2M37,564.5h3M38.5,563v1M43.5,563v2M47,564.5h3M48.5,563v1M52.5,563v2M53.5,566v4M59.5,563v2M80.5,566v4M82.5,563v2M88,564.5h3M89.5,563v1M102.5,563v2M104.5,566v4M105.5,563v2M457.5,563v2M466.5,563v2M470.5,563v2M473,564.5h3M474.5,563v1M477.5,563v2M483.5,566v4M492.5,563v2M498.5,566v4M507.5,566v4M526.5,566v4M532.5,563v2M551.5,563v2M570.5,563v2M573.5,563v2M576.5,563v2M580,564.5h3M581.5,563v1M586.5,563v2M604,564.5h3M605.5,563v1M610.5,566v4M629.5,563v2M637.5,566v4M641.5,563v2M659,564.5h3M660.5,563v1M674.5,563v2M682.5,563v2M692,564.5h3M693.5,563v1M699.5,563v2M705.5,566v4M712.5,563v2M720.5,563v2M1076.5,563v2M1080.5,563v2M1085.5,563v2M1090.5,563v2M1099.5,566v4M1103.5,563v2M1122.5,563v2M1129,564.5h3M1130.5,563v1" fill="none" stroke="#00fa00" stroke-width="1" shape-rendering="crispEdges"/><rect x="448" y="564" width="17" height="1" fill="#00fa00"/><rect x="1065" y="564" width="17" height="1" fill="#00fa00"/><rect x="144" y="306" width="281" height="3" fill="#00fa00"/><rect x="761" y="306" width="281" height="3" fill="#00fa00"/><path d="M8,411 H20 L25.300,416.500 L20,422 H8 Z" fill="#0f0"/><text x="12.300" y="421.300" font-family="Liberation Sans, sans-serif" font-size="12.500" font-weight="bold" fill="#000">2</text><path d="M1155,358 H1143 L1137.600,363.500 L1143,369 H1155 Z" fill="#ff0"/><text x="1149.400" y="367.800" text-anchor="middle" font-family="Liberation Sans, sans-serif" font-size="10.600" fill="#000">T</text></svg>
<div class="bb" style="left:167px;top:679px;width:92px;height:19px;color:#0f0;font-size:12.4px;line-height:19px"><span class="a" style="left:2px;top:1px">CH2</span><svg class="a" style="left:29px;top:7px" width="12" height="7" viewBox="0 0 12 7"><path d="M1,1.500H11" stroke="#0f0" stroke-width="1" stroke-dasharray="1 2" shape-rendering="crispEdges"/><path d="M1,5.500H11" stroke="#0f0" stroke-width="1" shape-rendering="crispEdges"/></svg><span class="a" style="left:51px;top:1px">1.00V</span></div>
<div class="bb" style="left:922px;top:679px;width:213px;height:19px;color:#ff8000;font-size:12.2px;line-height:19px"><span class="a" style="left:3px;top:1px">Time: 1.000ms</span><span class="a" style="left:103px;top:1px">Sample Rate: 1MHz</span></div>
<div class="a" style="left:0;top:707px;width:1366px;height:1px;background:#a5a5a5"></div>
<div id="status" class="a"><span class="a" style="left:4px;top:2px;line-height:15px;font-size:12px;letter-spacing:-.17px">Running...</span><span class="a" style="left:1262px;top:2px;line-height:15px;white-space:pre;font-size:12px;letter-spacing:-.42px">09-12-2019  21:42</span></div>
<div id="cp" class="a"><div id="cph" class="a"><span class="a" style="left:4px;top:0">Control Panel</span><svg class="a" style="left:168px;top:2px" width="32" height="14" viewBox="0 0 32 14"><path d="M4.500,3.500 h3 v4 h-3 z M6.500,3.500 v4 M3,7.500 h6 M5.500,8 v3.500" fill="none" stroke="#000" stroke-width="1"/><path d="M19,3.500 l6.500,6.500 M25.500,3.500 l-6.500,6.500" stroke="#000" stroke-width="1.500" fill="none"/></svg></div><div class="combo" style="left:4px;top:19px;width:200px;height:23px;font-size:12px;letter-spacing:-.4px;line-height:23px">Scope<i style="right:4px"></i></div><div id="cpg" class="a"></div><div id="cpc" class="a"><div class="grp" style="left:5px;top:12px;width:190px;height:118px"></div><div class="gt" style="left:81px;top:5px">Horizontal</div><div class="lb" style="left:15px;top:24.5px;color:#000"><span style="letter-spacing:-.45px">Time/DIV</span></div><div class="combo" style="left:14px;top:44px;width:74px"><span style="letter-spacing:-.4px">1.000ms</span><i></i></div><div class="lb" style="left:15px;top:75px;color:#000"><span style="letter-spacing:-.25px">Format</span></div><div class="combo" style="left:14px;top:96px;width:74px">Y-T<i></i></div><svg class="a" style="left:0;top:0;overflow:visible" width="184" height="544" viewBox="0 0 184 544"><ellipse cx="148.4" cy="77.4" rx="33.2" ry="32.4" fill="#b9b9b9"/><path d="M124.12,99.50 A33.2,32.4 0 0 1 171.88,54.49 Z" fill="#d4d4d4"/><ellipse cx="148.4" cy="77.4" rx="27.4" ry="26.5" fill="#0000c8"/><path d="M146,40.5h5M139,41.5h7M151,41.5h6M136,42.5h3M146,42.5h5M157,42.5h4M133,43.5h3M140,43.5h6M151,43.5h6M161,43.5h2M131,44.5h2M136,44.5h4M146,44.5h5M157,44.5h4M163,44.5h3M129,45.5h2M134,45.5h2M140,45.5h6M151,45.5h6M161,45.5h2M166,45.5h1M128,46.5h1M132,46.5h2M137,46.5h3M157,46.5h3M163,46.5h2M167,46.5h2M126,47.5h2M130,47.5h2M134,47.5h3M160,47.5h3M165,47.5h2M169,47.5h2M125,48.5h1M128,48.5h2M132,48.5h2M163,48.5h2M167,48.5h1M171,48.5h1M124,49.5h1M127,49.5h1M130,49.5h2M165,49.5h1M168,49.5h2M172,49.5h1M123,50.5h1M126,50.5h1M129,50.5h1M146,50.5h5M166,50.5h2M170,50.5h1M173,50.5h1M122,51.5h1M125,51.5h1M128,51.5h1M141,51.5h5M151,51.5h5M168,51.5h1M171,51.5h1M174,51.5h1M121,52.5h1M123,52.5h2M126,52.5h2M138,52.5h3M156,52.5h3M169,52.5h1M172,52.5h1M175,52.5h1M120,53.5h1M122,53.5h1M125,53.5h1M136,53.5h2M159,53.5h2M170,53.5h2M173,53.5h1M176,53.5h1M119,54.5h1M121,54.5h1M134,54.5h2M161,54.5h2M174,54.5h1M177,54.5h1M118,55.5h1M121,55.5h1M123,55.5h1M132,55.5h2M163,55.5h2M173,55.5h1M175,55.5h1M178,55.5h1M117,56.5h1M120,56.5h1M122,56.5h1M131,56.5h1M165,56.5h1M173,56.5h1M176,56.5h1M178,56.5h1M117,57.5h1M119,57.5h1M122,57.5h1M130,57.5h1M166,57.5h1M174,57.5h1M177,57.5h1M179,57.5h1M116,58.5h1M118,58.5h1M121,58.5h1M129,58.5h1M167,58.5h1M175,58.5h1M177,58.5h1M180,58.5h1M115,59.5h1M118,59.5h1M120,59.5h1M128,59.5h1M168,59.5h1M176,59.5h1M178,59.5h1M180,59.5h1M115,60.5h1M117,60.5h1M119,60.5h1M127,60.5h1M169,60.5h1M176,60.5h1M179,60.5h1M181,60.5h1M114,61.5h1M117,61.5h1M119,61.5h1M126,61.5h1M170,61.5h1M177,61.5h1M179,61.5h1M181,61.5h1M114,62.5h1M116,62.5h1M118,62.5h1M125,62.5h1M171,62.5h1M177,62.5h1M180,62.5h1M182,62.5h1M113,63.5h1M116,63.5h1M118,63.5h1M125,63.5h1M171,63.5h1M178,63.5h1M180,63.5h1M182,63.5h1M113,64.5h1M115,64.5h1M117,64.5h1M124,64.5h1M172,64.5h1M178,64.5h1M181,64.5h1M183,64.5h1M113,65.5h1M115,65.5h1M117,65.5h1M123,65.5h1M172,65.5h1M179,65.5h1M181,65.5h1M183,65.5h1M112,66.5h1M114,66.5h1M117,66.5h1M123,66.5h1M173,66.5h1M179,66.5h1M181,66.5h1M183,66.5h1M112,67.5h1M114,67.5h1M116,67.5h1M122,67.5h1M173,67.5h1M180,67.5h1M182,67.5h1M184,67.5h1M112,68.5h1M114,68.5h1M116,68.5h1M122,68.5h1M174,68.5h1M180,68.5h1M182,68.5h1M184,68.5h1M111,69.5h1M114,69.5h1M116,69.5h1M122,69.5h1M174,69.5h1M180,69.5h1M182,69.5h1M184,69.5h1M111,70.5h1M113,70.5h1M115,70.5h1M121,70.5h1M174,70.5h1M180,70.5h1M182,70.5h1M185,70.5h1M111,71.5h1M113,71.5h1M115,71.5h1M121,71.5h1M175,71.5h1M181,71.5h1M183,71.5h1M185,71.5h1M111,72.5h1M113,72.5h1M115,72.5h1M121,72.5h1M175,72.5h1M181,72.5h1M183,72.5h1M185,72.5h1M111,73.5h1M113,73.5h1M115,73.5h1M121,73.5h1M175,73.5h1M181,73.5h1M183,73.5h1M185,73.5h1M111,74.5h1M113,74.5h1M115,74.5h1M121,74.5h1M175,74.5h1M181,74.5h1M183,74.5h1M185,74.5h1M111,75.5h1M113,75.5h1M115,75.5h1M121,75.5h1M175,75.5h1M181,75.5h1M183,75.5h1M185,75.5h1M111,76.5h1M113,76.5h1M115,76.5h1M121,76.5h1M175,76.5h1M181,76.5h1M183,76.5h1M185,76.5h1M111,77.5h1M113,77.5h1M115,77.5h1M121,77.5h1M175,77.5h1M181,77.5h1M183,77.5h1M185,77.5h1M111,78.5h1M113,78.5h1M115,78.5h1M121,78.5h1M175,78.5h1M181,78.5h1M183,78.5h1M185,78.5h1M111,79.5h1M113,79.5h1M115,79.5h1M121,79.5h1M175,79.5h1M181,79.5h1M183,79.5h1M185,79.5h1M111,80.5h1M113,80.5h1M115,80.5h1M121,80.5h1M175,80.5h1M181,80.5h1M183,80.5h1M185,80.5h1M111,81.5h1M113,81.5h1M115,81.5h1M121,81.5h1M175,81.5h1M181,81.5h1M183,81.5h1M185,81.5h1M111,82.5h1M113,82.5h1M115,82.5h1M121,82.5h1M175,82.5h1M181,82.5h1M183,82.5h1M185,82.5h1M111,83.5h1M113,83.5h1M115,83.5h1M121,83.5h1M175,83.5h1M181,83.5h1M183,83.5h1M185,83.5h1M111,84.5h1M113,84.5h1M115,84.5h1M122,84.5h1M174,84.5h1M180,84.5h1M182,84.5h1M184,84.5h1M112,85.5h1M114,85.5h1M116,85.5h1M122,85.5h1M174,85.5h1M180,85.5h1M182,85.5h1M184,85.5h1M112,86.5h1M114,86.5h1M116,86.5h1M122,86.5h1M174,86.5h1M180,86.5h1M182,86.5h1M184,86.5h1M112,87.5h1M114,87.5h1M116,87.5h1M123,87.5h1M173,87.5h1M180,87.5h1M182,87.5h1M184,87.5h1M112,88.5h1M114,88.5h1M117,88.5h1M123,88.5h1M173,88.5h1M179,88.5h1M181,88.5h1M183,88.5h1M113,89.5h1M115,89.5h1M117,89.5h1M124,89.5h1M172,89.5h1M179,89.5h1M181,89.5h1M183,89.5h1M113,90.5h1M115,90.5h1M117,90.5h1M124,90.5h1M172,90.5h1M178,90.5h1M181,90.5h1M183,90.5h1M113,91.5h1M116,91.5h1M118,91.5h1M125,91.5h1M171,91.5h1M178,91.5h1M180,91.5h1M182,91.5h1M114,92.5h1M116,92.5h1M118,92.5h1M125,92.5h1M170,92.5h1M177,92.5h1M180,92.5h1M182,92.5h1M114,93.5h1M117,93.5h1M119,93.5h1M126,93.5h1M170,93.5h1M177,93.5h1M179,93.5h1M181,93.5h1M115,94.5h1M117,94.5h1M120,94.5h1M127,94.5h1M169,94.5h1M176,94.5h1M179,94.5h1M181,94.5h1M116,95.5h1M118,95.5h1M120,95.5h1M128,95.5h1M168,95.5h1M176,95.5h1M178,95.5h1M180,95.5h1M116,96.5h1M119,96.5h1M121,96.5h1M129,96.5h1M167,96.5h1M175,96.5h1M177,96.5h1M180,96.5h1M117,97.5h1M119,97.5h1M122,97.5h1M130,97.5h1M166,97.5h1M174,97.5h1M177,97.5h1M179,97.5h1M117,98.5h1M120,98.5h1M123,98.5h1M131,98.5h2M164,98.5h2M173,98.5h1M176,98.5h1M178,98.5h1M118,99.5h1M121,99.5h1M123,99.5h1M133,99.5h1M163,99.5h1M172,99.5h1M175,99.5h1M178,99.5h1M119,100.5h1M122,100.5h1M125,100.5h1M134,100.5h2M161,100.5h2M171,100.5h1M174,100.5h1M177,100.5h1M120,101.5h1M123,101.5h1M126,101.5h1M136,101.5h2M159,101.5h2M170,101.5h1M173,101.5h1M176,101.5h1M121,102.5h1M127,102.5h1M138,102.5h3M155,102.5h4M169,102.5h1M175,102.5h1M128,103.5h1M141,103.5h14M168,103.5h1M129,104.5h2M166,104.5h2M131,105.5h2M164,105.5h2M133,106.5h2M162,106.5h2M135,107.5h2M160,107.5h2M137,108.5h4M156,108.5h4M141,109.5h15" stroke="#000" stroke-width="1" fill="none" shape-rendering="crispEdges"/><path d="M124.05,99.56 L128.36,95.47 M171.95,54.42 L167.77,58.66" stroke="#444" stroke-width=".9"/><path d="M125.00,100.10 L117.10,107.70 M172.30,100.10 L179.90,107.70" stroke="#000" stroke-width="1.5"/><path d="M152.00,54.68 L149.34,71.47" stroke="#ffffb0" stroke-width="2"/></svg><div class="grp" style="left:5px;top:149px;width:190px;height:284px"></div><div class="gt" style="left:87px;top:142px">Vertical</div><div class="cb" style="left:14px;top:166px"></div><div class="lb" style="left:30px;top:166px;color:#000"><span style="letter-spacing:-.9px">CH1</span></div><div class="combo dis" style="left:14px;top:187px;width:74px">200mV<i></i></div><div class="combo dis" style="left:14px;top:222px;width:74px">DC<i></i></div><div class="combo dis" style="left:14px;top:257px;width:74px">x1<i></i></div><svg class="a" style="left:0;top:0;overflow:visible" width="184" height="544" viewBox="0 0 184 544"><ellipse cx="148.4" cy="212.2" rx="33.2" ry="32.4" fill="#b4b4b4"/><path d="M124.12,234.30 A33.2,32.4 0 0 1 171.88,189.29 Z" fill="#cccccc"/><ellipse cx="148.4" cy="212.2" rx="27.4" ry="26.5" fill="#999999"/><path d="M144,175.5h9M139,176.5h5M153,176.5h5M135,177.5h4M144,177.5h9M158,177.5h3M133,178.5h2M139,178.5h5M153,178.5h5M161,178.5h3M131,179.5h2M136,179.5h3M144,179.5h9M158,179.5h3M164,179.5h2M129,180.5h2M133,180.5h3M139,180.5h5M153,180.5h5M161,180.5h2M166,180.5h2M127,181.5h2M131,181.5h2M136,181.5h3M158,181.5h3M163,181.5h2M168,181.5h1M126,182.5h1M130,182.5h1M134,182.5h2M161,182.5h2M165,182.5h2M169,182.5h2M125,183.5h1M128,183.5h2M132,183.5h2M163,183.5h2M167,183.5h2M171,183.5h1M124,184.5h1M127,184.5h1M130,184.5h2M165,184.5h2M169,184.5h1M172,184.5h1M122,185.5h2M125,185.5h2M129,185.5h1M144,185.5h9M167,185.5h1M170,185.5h1M173,185.5h1M124,186.5h1M127,186.5h2M140,186.5h4M153,186.5h4M168,186.5h1M171,186.5h2M174,186.5h1M120,187.5h1M123,187.5h1M126,187.5h1M137,187.5h3M157,187.5h3M169,187.5h2M173,187.5h1M175,187.5h1M120,188.5h1M122,188.5h1M125,188.5h1M135,188.5h2M160,188.5h2M171,188.5h1M174,188.5h1M176,188.5h1M119,189.5h1M121,189.5h1M124,189.5h1M133,189.5h2M162,189.5h1M172,189.5h1M174,189.5h1M177,189.5h1M118,190.5h1M120,190.5h1M123,190.5h1M132,190.5h1M163,190.5h2M173,190.5h1M175,190.5h1M178,190.5h1M117,191.5h1M120,191.5h1M122,191.5h1M131,191.5h1M165,191.5h1M174,191.5h1M176,191.5h1M179,191.5h1M116,192.5h1M119,192.5h1M121,192.5h1M130,192.5h1M166,192.5h1M174,192.5h1M177,192.5h1M179,192.5h1M116,193.5h1M118,193.5h1M121,193.5h1M129,193.5h1M167,193.5h1M175,193.5h1M178,193.5h1M180,193.5h1M115,194.5h1M118,194.5h1M120,194.5h1M128,194.5h1M168,194.5h1M176,194.5h1M178,194.5h1M181,194.5h1M115,195.5h1M117,195.5h1M119,195.5h1M127,195.5h1M169,195.5h1M176,195.5h1M179,195.5h1M181,195.5h1M114,196.5h1M116,196.5h1M119,196.5h1M126,196.5h1M170,196.5h1M177,196.5h1M179,196.5h1M182,196.5h1M114,197.5h1M116,197.5h1M118,197.5h1M125,197.5h1M171,197.5h1M178,197.5h1M180,197.5h1M182,197.5h1M113,198.5h1M116,198.5h1M118,198.5h1M124,198.5h1M171,198.5h1M178,198.5h1M180,198.5h1M182,198.5h1M113,199.5h1M115,199.5h1M117,199.5h1M124,199.5h1M172,199.5h1M179,199.5h1M181,199.5h1M183,199.5h1M113,200.5h1M115,200.5h1M117,200.5h1M123,200.5h1M172,200.5h1M179,200.5h1M181,200.5h1M183,200.5h1M112,201.5h1M114,201.5h1M116,201.5h1M123,201.5h1M173,201.5h1M179,201.5h1M181,201.5h1M184,201.5h1M112,202.5h1M114,202.5h1M116,202.5h1M122,202.5h1M173,202.5h1M180,202.5h1M182,202.5h1M184,202.5h1M112,203.5h1M114,203.5h1M116,203.5h1M122,203.5h1M174,203.5h1M180,203.5h1M182,203.5h1M184,203.5h1M111,204.5h1M113,204.5h1M116,204.5h1M122,204.5h1M174,204.5h1M180,204.5h1M182,204.5h1M184,204.5h1M111,205.5h1M113,205.5h1M115,205.5h1M121,205.5h1M174,205.5h1M180,205.5h1M183,205.5h1M185,205.5h1M111,206.5h1M113,206.5h1M115,206.5h1M121,206.5h1M175,206.5h1M181,206.5h1M183,206.5h1M185,206.5h1M111,207.5h1M113,207.5h1M115,207.5h1M121,207.5h1M175,207.5h1M181,207.5h1M183,207.5h1M185,207.5h1M111,208.5h1M113,208.5h1M115,208.5h1M121,208.5h1M175,208.5h1M181,208.5h1M183,208.5h1M185,208.5h1M111,209.5h1M113,209.5h1M115,209.5h1M121,209.5h1M175,209.5h1M181,209.5h1M183,209.5h1M185,209.5h1M111,210.5h1M113,210.5h1M115,210.5h1M121,210.5h1M175,210.5h1M181,210.5h1M183,210.5h1M185,210.5h1M111,211.5h1M113,211.5h1M115,211.5h1M121,211.5h1M175,211.5h1M181,211.5h1M183,211.5h1M185,211.5h1M111,212.5h1M113,212.5h1M115,212.5h1M121,212.5h1M175,212.5h1M181,212.5h1M183,212.5h1M185,212.5h1M111,213.5h1M113,213.5h1M115,213.5h1M121,213.5h1M175,213.5h1M181,213.5h1M183,213.5h1M185,213.5h1M111,214.5h1M113,214.5h1M115,214.5h1M121,214.5h1M175,214.5h1M181,214.5h1M183,214.5h1M185,214.5h1M111,215.5h1M113,215.5h1M115,215.5h1M121,215.5h1M175,215.5h1M181,215.5h1M183,215.5h1M185,215.5h1M111,216.5h1M113,216.5h1M115,216.5h1M121,216.5h1M175,216.5h1M181,216.5h1M183,216.5h1M185,216.5h1M111,217.5h1M113,217.5h1M115,217.5h1M121,217.5h1M175,217.5h1M181,217.5h1M183,217.5h1M185,217.5h1M111,218.5h1M113,218.5h1M115,218.5h1M121,218.5h1M175,218.5h1M181,218.5h1M183,218.5h1M185,218.5h1M111,219.5h1M113,219.5h1M115,219.5h1M122,219.5h1M174,219.5h1M180,219.5h1M182,219.5h1M184,219.5h1M112,220.5h1M114,220.5h1M116,220.5h1M122,220.5h1M174,220.5h1M180,220.5h1M182,220.5h1M184,220.5h1M112,221.5h1M114,221.5h1M116,221.5h1M122,221.5h1M174,221.5h1M180,221.5h1M182,221.5h1M184,221.5h1M112,222.5h1M114,222.5h1M116,222.5h1M123,222.5h1M173,222.5h1M179,222.5h1M182,222.5h1M184,222.5h1M112,223.5h1M115,223.5h1M117,223.5h1M123,223.5h1M173,223.5h1M179,223.5h1M181,223.5h1M183,223.5h1M113,224.5h1M115,224.5h1M117,224.5h1M124,224.5h1M172,224.5h1M179,224.5h1M181,224.5h1M183,224.5h1M113,225.5h1M115,225.5h1M118,225.5h1M124,225.5h1M172,225.5h1M178,225.5h1M180,225.5h1M183,225.5h1M114,226.5h1M116,226.5h1M118,226.5h1M125,226.5h1M171,226.5h1M178,226.5h1M180,226.5h1M182,226.5h1M114,227.5h1M116,227.5h1M119,227.5h1M126,227.5h1M170,227.5h1M177,227.5h1M180,227.5h1M182,227.5h1M115,228.5h1M117,228.5h1M119,228.5h1M126,228.5h1M170,228.5h1M177,228.5h1M179,228.5h1M181,228.5h1M115,229.5h1M117,229.5h1M120,229.5h1M127,229.5h1M169,229.5h1M176,229.5h1M178,229.5h1M181,229.5h1M116,230.5h1M118,230.5h1M120,230.5h1M128,230.5h1M168,230.5h1M175,230.5h1M178,230.5h1M180,230.5h1M116,231.5h1M119,231.5h1M121,231.5h1M129,231.5h1M167,231.5h1M175,231.5h1M177,231.5h1M180,231.5h1M117,232.5h1M119,232.5h1M122,232.5h1M130,232.5h1M165,232.5h2M174,232.5h1M176,232.5h1M179,232.5h1M118,233.5h1M120,233.5h1M123,233.5h1M131,233.5h2M164,233.5h1M173,233.5h1M176,233.5h1M178,233.5h1M118,234.5h1M121,234.5h1M124,234.5h1M133,234.5h1M162,234.5h2M172,234.5h1M175,234.5h1M177,234.5h1M119,235.5h1M122,235.5h1M125,235.5h1M134,235.5h2M160,235.5h2M171,235.5h1M174,235.5h1M177,235.5h1M120,236.5h1M123,236.5h1M126,236.5h1M136,236.5h3M158,236.5h2M170,236.5h1M173,236.5h1M176,236.5h1M121,237.5h1M127,237.5h1M139,237.5h3M155,237.5h3M169,237.5h1M175,237.5h1M128,238.5h2M142,238.5h13M167,238.5h2M130,239.5h1M166,239.5h1M131,240.5h2M164,240.5h2M133,241.5h2M162,241.5h2M135,242.5h3M159,242.5h3M138,243.5h4M155,243.5h4M142,244.5h13" stroke="#000" stroke-width="1" fill="none" shape-rendering="crispEdges"/><path d="M124.05,234.36 L128.36,230.27 M171.95,189.22 L167.77,193.46" stroke="#444" stroke-width=".9"/><path d="M125.00,234.90 L117.10,242.50 M172.30,234.90 L179.90,242.50" stroke="#000" stroke-width="1.5"/><path d="M157.75,191.19 L150.84,206.72" stroke="#e8e8b0" stroke-width="2"/></svg><div class="cb" style="left:125px;top:264px;border-color:#b8b8b8"></div><div class="lb" style="left:141px;top:264px;color:#7a7a7a">Invert</div><div class="cb" style="left:14px;top:306px"></div><svg class="a" style="left:14px;top:306px" width="13" height="13" viewBox="0 0 13 13"><path d="M3,6 l2.500,3.500 l4.500,-7" fill="none" stroke="#2b3f91" stroke-width="1.800"/></svg><div class="lb" style="left:30px;top:306px;color:#000"><span style="letter-spacing:-.9px">CH2</span></div><div class="combo" style="left:14px;top:327px;width:74px">1.00V<i></i></div><div class="combo dis" style="left:14px;top:362px;width:74px">DC<i></i></div><div class="combo" style="left:14px;top:397px;width:74px">x1<i></i></div><svg class="a" style="left:0;top:0;overflow:visible" width="184" height="544" viewBox="0 0 184 544"><ellipse cx="148.4" cy="354.4" rx="33.2" ry="32.4" fill="#b9b9b9"/><path d="M124.12,376.50 A33.2,32.4 0 0 1 171.88,331.49 Z" fill="#d4d4d4"/><ellipse cx="148.4" cy="354.4" rx="27.4" ry="26.5" fill="#00ff00"/><path d="M146,317.5h5M139,318.5h7M151,318.5h6M136,319.5h3M146,319.5h5M157,319.5h4M133,320.5h3M140,320.5h6M151,320.5h6M161,320.5h2M131,321.5h2M136,321.5h4M146,321.5h5M157,321.5h4M163,321.5h3M129,322.5h2M134,322.5h2M140,322.5h6M151,322.5h6M161,322.5h2M166,322.5h1M128,323.5h1M132,323.5h2M137,323.5h3M157,323.5h3M163,323.5h2M167,323.5h2M126,324.5h2M130,324.5h2M134,324.5h3M160,324.5h3M165,324.5h2M169,324.5h2M125,325.5h1M128,325.5h2M132,325.5h2M163,325.5h2M167,325.5h1M171,325.5h1M124,326.5h1M127,326.5h1M130,326.5h2M165,326.5h1M168,326.5h2M172,326.5h1M123,327.5h1M126,327.5h1M129,327.5h1M146,327.5h5M166,327.5h2M170,327.5h1M173,327.5h1M122,328.5h1M125,328.5h1M128,328.5h1M141,328.5h5M151,328.5h5M168,328.5h1M171,328.5h1M174,328.5h1M121,329.5h1M123,329.5h2M126,329.5h2M138,329.5h3M156,329.5h3M169,329.5h1M172,329.5h1M175,329.5h1M120,330.5h1M122,330.5h1M125,330.5h1M136,330.5h2M159,330.5h2M170,330.5h2M173,330.5h1M176,330.5h1M119,331.5h1M121,331.5h1M134,331.5h2M161,331.5h2M174,331.5h1M177,331.5h1M118,332.5h1M121,332.5h1M123,332.5h1M132,332.5h2M163,332.5h2M173,332.5h1M175,332.5h1M178,332.5h1M117,333.5h1M120,333.5h1M122,333.5h1M131,333.5h1M165,333.5h1M173,333.5h1M176,333.5h1M178,333.5h1M117,334.5h1M119,334.5h1M122,334.5h1M130,334.5h1M166,334.5h1M174,334.5h1M177,334.5h1M179,334.5h1M116,335.5h1M118,335.5h1M121,335.5h1M129,335.5h1M167,335.5h1M175,335.5h1M177,335.5h1M180,335.5h1M115,336.5h1M118,336.5h1M120,336.5h1M128,336.5h1M168,336.5h1M176,336.5h1M178,336.5h1M180,336.5h1M115,337.5h1M117,337.5h1M119,337.5h1M127,337.5h1M169,337.5h1M176,337.5h1M179,337.5h1M181,337.5h1M114,338.5h1M117,338.5h1M119,338.5h1M126,338.5h1M170,338.5h1M177,338.5h1M179,338.5h1M181,338.5h1M114,339.5h1M116,339.5h1M118,339.5h1M125,339.5h1M171,339.5h1M177,339.5h1M180,339.5h1M182,339.5h1M113,340.5h1M116,340.5h1M118,340.5h1M125,340.5h1M171,340.5h1M178,340.5h1M180,340.5h1M182,340.5h1M113,341.5h1M115,341.5h1M117,341.5h1M124,341.5h1M172,341.5h1M178,341.5h1M181,341.5h1M183,341.5h1M113,342.5h1M115,342.5h1M117,342.5h1M123,342.5h1M172,342.5h1M179,342.5h1M181,342.5h1M183,342.5h1M112,343.5h1M114,343.5h1M117,343.5h1M123,343.5h1M173,343.5h1M179,343.5h1M181,343.5h1M183,343.5h1M112,344.5h1M114,344.5h1M116,344.5h1M122,344.5h1M173,344.5h1M180,344.5h1M182,344.5h1M184,344.5h1M112,345.5h1M114,345.5h1M116,345.5h1M122,345.5h1M174,345.5h1M180,345.5h1M182,345.5h1M184,345.5h1M111,346.5h1M114,346.5h1M116,346.5h1M122,346.5h1M174,346.5h1M180,346.5h1M182,346.5h1M184,346.5h1M111,347.5h1M113,347.5h1M115,347.5h1M121,347.5h1M174,347.5h1M180,347.5h1M182,347.5h1M185,347.5h1M111,348.5h1M113,348.5h1M115,348.5h1M121,348.5h1M175,348.5h1M181,348.5h1M183,348.5h1M185,348.5h1M111,349.5h1M113,349.5h1M115,349.5h1M121,349.5h1M175,349.5h1M181,349.5h1M183,349.5h1M185,349.5h1M111,350.5h1M113,350.5h1M115,350.5h1M121,350.5h1M175,350.5h1M181,350.5h1M183,350.5h1M185,350.5h1M111,351.5h1M113,351.5h1M115,351.5h1M121,351.5h1M175,351.5h1M181,351.5h1M183,351.5h1M185,351.5h1M111,352.5h1M113,352.5h1M115,352.5h1M121,352.5h1M175,352.5h1M181,352.5h1M183,352.5h1M185,352.5h1M111,353.5h1M113,353.5h1M115,353.5h1M121,353.5h1M175,353.5h1M181,353.5h1M183,353.5h1M185,353.5h1M111,354.5h1M113,354.5h1M115,354.5h1M121,354.5h1M175,354.5h1M181,354.5h1M183,354.5h1M185,354.5h1M111,355.5h1M113,355.5h1M115,355.5h1M121,355.5h1M175,355.5h1M181,355.5h1M183,355.5h1M185,355.5h1M111,356.5h1M113,356.5h1M115,356.5h1M121,356.5h1M175,356.5h1M181,356.5h1M183,356.5h1M185,356.5h1M111,357.5h1M113,357.5h1M115,357.5h1M121,357.5h1M175,357.5h1M181,357.5h1M183,357.5h1M185,357.5h1M111,358.5h1M113,358.5h1M115,358.5h1M121,358.5h1M175,358.5h1M181,358.5h1M183,358.5h1M185,358.5h1M111,359.5h1M113,359.5h1M115,359.5h1M121,359.5h1M175,359.5h1M181,359.5h1M183,359.5h1M185,359.5h1M111,360.5h1M113,360.5h1M115,360.5h1M121,360.5h1M175,360.5h1M181,360.5h1M183,360.5h1M185,360.5h1M111,361.5h1M113,361.5h1M115,361.5h1M122,361.5h1M174,361.5h1M180,361.5h1M182,361.5h1M184,361.5h1M112,362.5h1M114,362.5h1M116,362.5h1M122,362.5h1M174,362.5h1M180,362.5h1M182,362.5h1M184,362.5h1M112,363.5h1M114,363.5h1M116,363.5h1M122,363.5h1M174,363.5h1M180,363.5h1M182,363.5h1M184,363.5h1M112,364.5h1M114,364.5h1M116,364.5h1M123,364.5h1M173,364.5h1M180,364.5h1M182,364.5h1M184,364.5h1M112,365.5h1M114,365.5h1M117,365.5h1M123,365.5h1M173,365.5h1M179,365.5h1M181,365.5h1M183,365.5h1M113,366.5h1M115,366.5h1M117,366.5h1M124,366.5h1M172,366.5h1M179,366.5h1M181,366.5h1M183,366.5h1M113,367.5h1M115,367.5h1M117,367.5h1M124,367.5h1M172,367.5h1M178,367.5h1M181,367.5h1M183,367.5h1M113,368.5h1M116,368.5h1M118,368.5h1M125,368.5h1M171,368.5h1M178,368.5h1M180,368.5h1M182,368.5h1M114,369.5h1M116,369.5h1M118,369.5h1M125,369.5h1M170,369.5h1M177,369.5h1M180,369.5h1M182,369.5h1M114,370.5h1M117,370.5h1M119,370.5h1M126,370.5h1M170,370.5h1M177,370.5h1M179,370.5h1M181,370.5h1M115,371.5h1M117,371.5h1M120,371.5h1M127,371.5h1M169,371.5h1M176,371.5h1M179,371.5h1M181,371.5h1M116,372.5h1M118,372.5h1M120,372.5h1M128,372.5h1M168,372.5h1M176,372.5h1M178,372.5h1M180,372.5h1M116,373.5h1M119,373.5h1M121,373.5h1M129,373.5h1M167,373.5h1M175,373.5h1M177,373.5h1M180,373.5h1M117,374.5h1M119,374.5h1M122,374.5h1M130,374.5h1M166,374.5h1M174,374.5h1M177,374.5h1M179,374.5h1M117,375.5h1M120,375.5h1M123,375.5h1M131,375.5h2M164,375.5h2M173,375.5h1M176,375.5h1M178,375.5h1M118,376.5h1M121,376.5h1M123,376.5h1M133,376.5h1M163,376.5h1M172,376.5h1M175,376.5h1M178,376.5h1M119,377.5h1M122,377.5h1M125,377.5h1M134,377.5h2M161,377.5h2M171,377.5h1M174,377.5h1M177,377.5h1M120,378.5h1M123,378.5h1M126,378.5h1M136,378.5h2M159,378.5h2M170,378.5h1M173,378.5h1M176,378.5h1M121,379.5h1M127,379.5h1M138,379.5h3M155,379.5h4M169,379.5h1M175,379.5h1M128,380.5h1M141,380.5h14M168,380.5h1M129,381.5h2M166,381.5h2M131,382.5h2M164,382.5h2M133,383.5h2M162,383.5h2M135,384.5h2M160,384.5h2M137,385.5h4M156,385.5h4M141,386.5h15" stroke="#000" stroke-width="1" fill="none" shape-rendering="crispEdges"/><path d="M124.05,376.56 L128.36,372.47 M171.95,331.42 L167.77,335.66" stroke="#444" stroke-width=".9"/><path d="M125.00,377.10 L117.10,384.70 M172.30,377.10 L179.90,384.70" stroke="#000" stroke-width="1.5"/><path d="M129.79,340.88 L143.55,350.87" stroke="#ffecdc" stroke-width="2"/></svg><div class="cb" style="left:125px;top:404px"></div><div class="lb" style="left:141px;top:404px;color:#000">Invert</div><div class="grp" style="left:5px;top:452px;width:190px;height:140px"></div><div class="gt" style="left:89px;top:445px">Trigger</div><div class="lb" style="left:18px;top:476.5px;color:#000">Trigger Mode</div><div class="combo" style="left:114px;top:474px;width:74px">Edge<i></i></div><div class="lb" style="left:18px;top:511.5px;color:#000">Trigger Sweep</div><div class="combo" style="left:114px;top:509px;width:74px">AUTO<i></i></div></div><div class="a" style="left:188px;top:66px;width:16px;height:544px;background:#e9e9e9;border-left:1px solid #f6f6f6"></div>
<svg class="a" style="left:188px;top:66px" width="16" height="544" viewBox="0 0 16 544">
<defs><linearGradient id="vt" x1="0" y1="0" x2="1" y2="0"><stop offset="0" stop-color="#f4f4f4"/><stop offset=".45" stop-color="#e2e2e2"/><stop offset=".5" stop-color="#cfcfcf"/><stop offset="1" stop-color="#d9d9d9"/></linearGradient></defs>
<path d="M4,11 L7.500,7.500 L11,11 Z" fill="#505050"/>
<rect x="0.500" y="18.500" width="14" height="353" rx="2" fill="url(#vt)" stroke="#8f8f8f"/>
<path d="M3.500,191.500 h8 M3.500,193.500 h8 M3.500,195.500 h8 M3.500,197.500 h8" stroke="#555" stroke-width="1"/>
<path d="M4,533.500 L7.500,537 L11,533.500 Z" fill="#505050"/>
</svg><div class="a" style="left:4px;top:610px;width:184px;height:16px;background:#e9e9e9;border-top:1px solid #f6f6f6"></div>
<svg class="a" style="left:4px;top:610px" width="200" height="16" viewBox="0 0 200 16">
<defs><linearGradient id="ht" x1="0" y1="0" x2="0" y2="1"><stop offset="0" stop-color="#f4f4f4"/><stop offset=".45" stop-color="#e2e2e2"/><stop offset=".5" stop-color="#cfcfcf"/><stop offset="1" stop-color="#d9d9d9"/></linearGradient></defs>
<rect x="184" y="0" width="16" height="16" fill="#f0f0f0"/>
<path d="M9.500,5 L6,8.500 L9.500,12 Z" fill="#404040"/>
<rect x="18.500" y="1.500" width="124" height="13" rx="2" fill="url(#ht)" stroke="#8f8f8f"/>
<path d="M77.500,5 v7 M79.500,5 v7 M81.500,5 v7" stroke="#555" stroke-width="1"/>
<path d="M174,5 L177.500,8.500 L174,12 Z" fill="#404040"/>
</svg></div></div></body></html>
